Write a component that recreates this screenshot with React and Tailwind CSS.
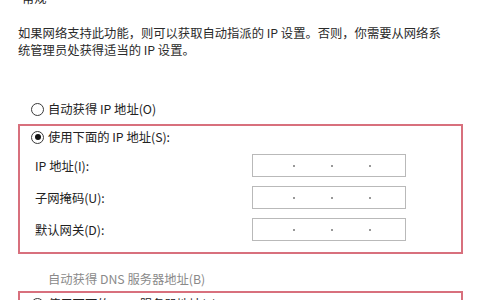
export default function App() {
  const Radio = ({ checked }) => (
    <span className="w-[13px] h-[13px] rounded-full border border-[#3a3a3a] flex items-center justify-center shrink-0 bg-white">
      {checked && <span className="w-[6px] h-[6px] rounded-full bg-[#111]" />}
    </span>
  );

  const IpInput = () => (
    <div className="w-[154px] h-[23px] border border-[#b9b9b9] bg-white flex items-center pl-[40px] gap-[36px]">
      <span className="w-[2px] h-[2px] rounded-full bg-[#777]" />
      <span className="w-[2px] h-[2px] rounded-full bg-[#777]" />
      <span className="w-[2px] h-[2px] rounded-full bg-[#777]" />
    </div>
  );

  const fields = ['IP 地址(I):', '子网掩码(U):', '默认网关(D):'];

  return (
    <div
      className="w-[480px] h-[300px] overflow-hidden bg-white text-[12.3px] text-[#222] pl-[18px] pr-[17px]"
      style={{ fontFamily: '"Noto Sans CJK SC", "Noto Sans", sans-serif' }}
    >
      <div className="leading-[14px] -mt-[9px] pl-[4px]">常规</div>

      <p className="mt-[20px] leading-[17px] text-[#2a2a2a] pr-[20px]">
        如果网络支持此功能，则可以获取自动指派的 IP 设置。否则，你需要从网络系统管理员处获得适当的 IP 设置。
      </p>

      <div className="mt-[42px] h-[16px] flex items-center gap-[4px] pl-[13px]">
        <Radio />
        <span>自动获得 IP 地址(O)</span>
      </div>

      <div className="mt-[7px] border-2 border-[#d8707d] pt-[3px] pb-[11px] pl-[11px]">
        <div className="h-[16px] flex items-center gap-[4px]">
          <Radio checked />
          <span>使用下面的 IP 地址(S):</span>
        </div>
        <div className="mt-[9px] flex flex-col gap-[9px]">
          {fields.map((f) => (
            <div key={f} className="flex items-center h-[23px]">
              <span className="w-[221px] pl-[4px] pt-[1px]">{f}</span>
              <IpInput />
            </div>
          ))}
        </div>
      </div>

      <div className="mt-[17px] h-[16px] flex items-center pl-[30px] text-[#8a8a8a]">
        <span>自动获得 DNS 服务器地址(B)</span>
      </div>

      <div className="mt-[4px] border-2 border-[#d8707d] pt-[3px] pb-[11px] pl-[11px]">
        <div className="h-[16px] flex items-center gap-[4px]">
          <Radio />
          <span>使用下面的 DNS 服务器地址(E):</span>
        </div>
      </div>
    </div>
  );
}
